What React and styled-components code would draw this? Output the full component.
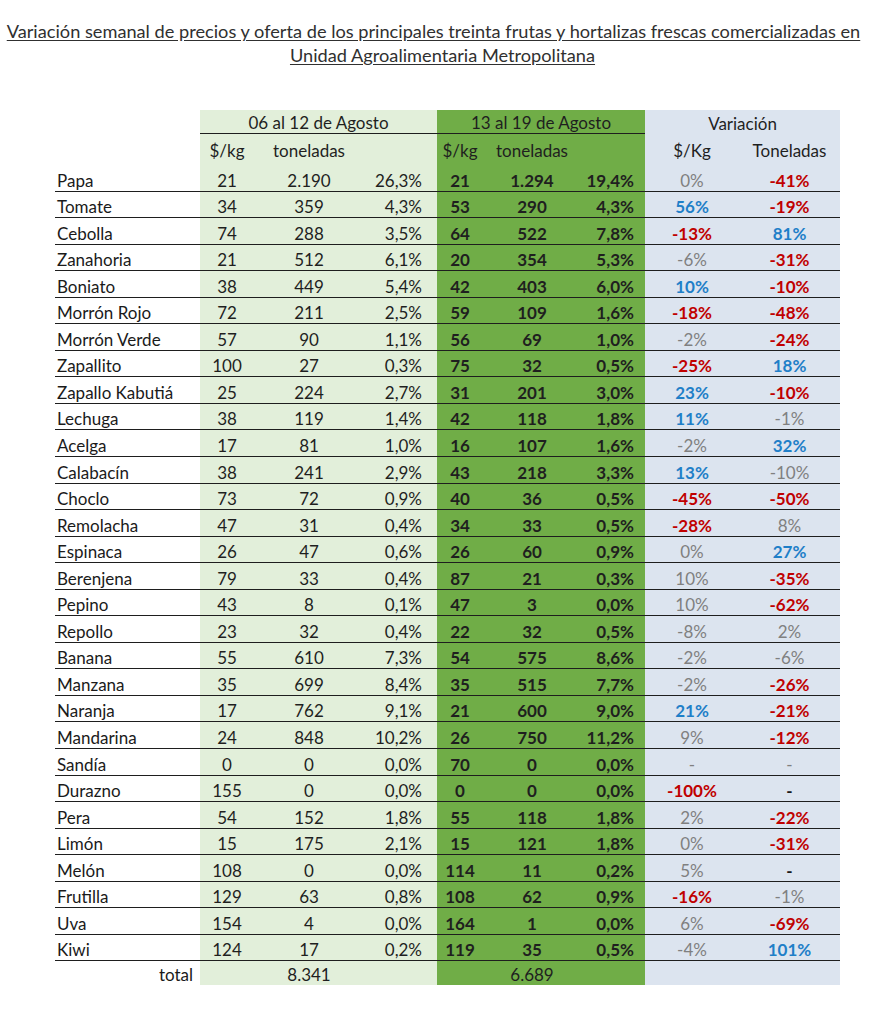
import React from 'react';
import styled, { createGlobalStyle } from 'styled-components';

const GlobalStyle = createGlobalStyle`
  body {
    margin: 0;
    background: #ffffff;
    font-family: Lato, "Open Sans", sans-serif;
  }
`;

const COLS = '145px 54px 110px 73px 46px 98px 64px 94px 101px';

const TONES = {
  none: 'transparent',
  light: '#e2efda',
  dark: '#70ad47',
  blue: '#dce4ef',
};

const INKS = {
  gray: { color: '#808080', weight: 400 },
  red: { color: '#c00000', weight: 700 },
  blue: { color: '#1f7fc8', weight: 700 },
  black: { color: '#1a1a1a', weight: 700 },
};

const Page = styled.div`
  width: 885px;
  padding-top: 19px;
  padding-bottom: 39px;
`;

const Title = styled.h1`
  margin: 0 auto;
  width: 880px;
  text-align: center;
  font-family: Lato, "Open Sans", sans-serif;
  font-weight: 400;
  font-size: 18.2px;
  line-height: 24px;
  color: #303030;
  text-decoration: underline;
  text-underline-offset: 2px;
`;

// first line sits a little left of centre in the original
const FirstLine = styled.span`
  display: inline-block;
  margin-right: 18px;
  text-decoration: underline;
  text-underline-offset: 2px;
`;

const Table = styled.div`
  margin: 43px 0 0 55px;
  width: 785px;
  color: #1f1f1f;
  font-size: 17px;
`;

const Row = styled.div`
  display: grid;
  grid-template-columns: ${COLS};
  height: ${(p) => p.$h}px;
  box-sizing: border-box;
  border-bottom: ${(p) => (p.$line ? '1px solid #1e1e1e' : 'none')};
`;

const Cell = styled.div`
  display: flex;
  align-items: flex-end;
  justify-content: ${(p) => p.$align || 'center'};
  grid-column: ${(p) => (p.$span ? `span ${p.$span}` : 'auto')};
  background: ${(p) => TONES[p.$tone || 'none']};
  padding: 0 ${(p) => p.$pr || 0}px ${(p) => p.$pb ?? 0}px ${(p) => p.$pl || 0}px;
  line-height: 20px;
  white-space: nowrap;
  font-weight: ${(p) => (p.$bold ? 700 : 400)};
  color: ${(p) => p.$color || 'inherit'};
`;

const GroupHead = styled(Cell)`
  align-items: center;
  padding-top: 3px;
  border-bottom: ${(p) => (p.$rule ? '1px solid #1e1e1e' : 'none')};
`;

const Label = styled(Cell)`
  justify-content: flex-start;
  padding-left: 2px;
  color: #1a1a1a;
`;

const TotalLabel = styled(Cell)`
  justify-content: flex-end;
  padding-right: 7px;
  color: #1a1a1a;
`;

const Var = styled(Cell)`
  color: ${(p) => INKS[p.$ink].color};
  font-weight: ${(p) => INKS[p.$ink].weight};
`;

const rows = [
  ['Papa', '21', '2.190', '26,3%', '21', '1.294', '19,4%', '0%', 'gray', '-41%', 'red'],
  ['Tomate', '34', '359', '4,3%', '53', '290', '4,3%', '56%', 'blue', '-19%', 'red'],
  ['Cebolla', '74', '288', '3,5%', '64', '522', '7,8%', '-13%', 'red', '81%', 'blue'],
  ['Zanahoria', '21', '512', '6,1%', '20', '354', '5,3%', '-6%', 'gray', '-31%', 'red'],
  ['Boniato', '38', '449', '5,4%', '42', '403', '6,0%', '10%', 'blue', '-10%', 'red'],
  ['Morrón Rojo', '72', '211', '2,5%', '59', '109', '1,6%', '-18%', 'red', '-48%', 'red'],
  ['Morrón Verde', '57', '90', '1,1%', '56', '69', '1,0%', '-2%', 'gray', '-24%', 'red'],
  ['Zapallito', '100', '27', '0,3%', '75', '32', '0,5%', '-25%', 'red', '18%', 'blue'],
  ['Zapallo Kabutiá', '25', '224', '2,7%', '31', '201', '3,0%', '23%', 'blue', '-10%', 'red'],
  ['Lechuga', '38', '119', '1,4%', '42', '118', '1,8%', '11%', 'blue', '-1%', 'gray'],
  ['Acelga', '17', '81', '1,0%', '16', '107', '1,6%', '-2%', 'gray', '32%', 'blue'],
  ['Calabacín', '38', '241', '2,9%', '43', '218', '3,3%', '13%', 'blue', '-10%', 'gray'],
  ['Choclo', '73', '72', '0,9%', '40', '36', '0,5%', '-45%', 'red', '-50%', 'red'],
  ['Remolacha', '47', '31', '0,4%', '34', '33', '0,5%', '-28%', 'red', '8%', 'gray'],
  ['Espinaca', '26', '47', '0,6%', '26', '60', '0,9%', '0%', 'gray', '27%', 'blue'],
  ['Berenjena', '79', '33', '0,4%', '87', '21', '0,3%', '10%', 'gray', '-35%', 'red'],
  ['Pepino', '43', '8', '0,1%', '47', '3', '0,0%', '10%', 'gray', '-62%', 'red'],
  ['Repollo', '23', '32', '0,4%', '22', '32', '0,5%', '-8%', 'gray', '2%', 'gray'],
  ['Banana', '55', '610', '7,3%', '54', '575', '8,6%', '-2%', 'gray', '-6%', 'gray'],
  ['Manzana', '35', '699', '8,4%', '35', '515', '7,7%', '-2%', 'gray', '-26%', 'red'],
  ['Naranja', '17', '762', '9,1%', '21', '600', '9,0%', '21%', 'blue', '-21%', 'red'],
  ['Mandarina', '24', '848', '10,2%', '26', '750', '11,2%', '9%', 'gray', '-12%', 'red'],
  ['Sandía', '0', '0', '0,0%', '70', '0', '0,0%', '-', 'gray', '-', 'gray'],
  ['Durazno', '155', '0', '0,0%', '0', '0', '0,0%', '-100%', 'red', '-', 'black'],
  ['Pera', '54', '152', '1,8%', '55', '118', '1,8%', '2%', 'gray', '-22%', 'red'],
  ['Limón', '15', '175', '2,1%', '15', '121', '1,8%', '0%', 'gray', '-31%', 'red'],
  ['Melón', '108', '0', '0,0%', '114', '11', '0,2%', '5%', 'gray', '-', 'black'],
  ['Frutilla', '129', '63', '0,8%', '108', '62', '0,9%', '-16%', 'red', '-1%', 'gray'],
  ['Uva', '154', '4', '0,0%', '164', '1', '0,0%', '6%', 'gray', '-69%', 'red'],
  ['Kiwi', '124', '17', '0,2%', '119', '35', '0,5%', '-4%', 'gray', '101%', 'blue'],
];

function DataRow({ r }) {
  const [name, p1, t1, s1, p2, t2, s2, vp, vpInk, vt, vtInk] = r;
  return (
    <Row $h={26.55} $line>
      <Label>{name}</Label>
      <Cell $tone="light">{p1}</Cell>
      <Cell $tone="light">{t1}</Cell>
      <Cell $tone="light" $align="flex-end" $pr={15}>{s1}</Cell>
      <Cell $tone="dark" $bold>{p2}</Cell>
      <Cell $tone="dark" $bold>{t2}</Cell>
      <Cell $tone="dark" $bold $align="flex-end" $pr={11}>{s2}</Cell>
      <Var $tone="blue" $ink={vpInk}>{vp}</Var>
      <Var $tone="blue" $ink={vtInk}>{vt}</Var>
    </Row>
  );
}

export default function App() {
  return (
    <Page>
      <GlobalStyle />
      <Title>
        <FirstLine>
          Variación semanal de precios y oferta de los principales treinta frutas y hortalizas frescas comercializadas en
        </FirstLine>
        <br />
        Unidad Agroalimentaria Metropolitana
      </Title>
      <Table>
        <Row $h={24}>
          <Cell />
          <GroupHead $span={3} $tone="light" $rule>06 al 12 de Agosto</GroupHead>
          <GroupHead $span={3} $tone="dark" $rule>13 al 19 de Agosto</GroupHead>
          <GroupHead $span={2} $tone="blue">Variación</GroupHead>
        </Row>
        <Row $h={31}>
          <Cell />
          <Cell $tone="light" $pb={4}>$/kg</Cell>
          <Cell $tone="light" $pb={4}>toneladas</Cell>
          <Cell $tone="light" />
          <Cell $tone="dark" $pb={4}>$/kg</Cell>
          <Cell $tone="dark" $pb={4}>toneladas</Cell>
          <Cell $tone="dark" />
          <Cell $tone="blue" $pb={4}>$/Kg</Cell>
          <Cell $tone="blue" $pb={4}>Toneladas</Cell>
        </Row>
        {rows.map((r) => (
          <DataRow key={r[0]} r={r} />
        ))}
        <Row $h={24}>
          <TotalLabel>total</TotalLabel>
          <Cell $tone="light" />
          <Cell $tone="light">8.341</Cell>
          <Cell $tone="light" />
          <Cell $tone="dark" />
          <Cell $tone="dark">6.689</Cell>
          <Cell $tone="dark" />
          <Cell $tone="blue" />
          <Cell $tone="blue" />
        </Row>
      </Table>
    </Page>
  );
}
